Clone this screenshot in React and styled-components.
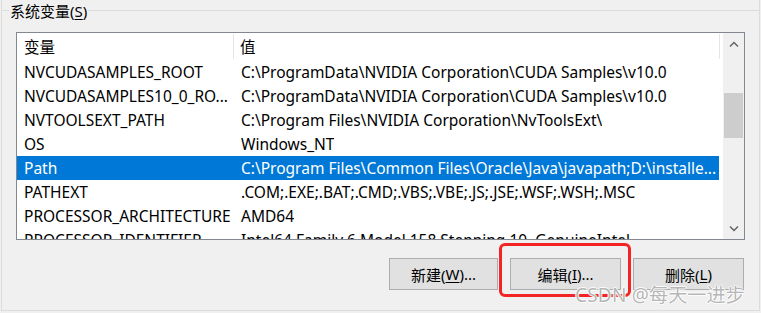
import React from "react";
import styled, { createGlobalStyle } from "styled-components";

const GlobalStyle = createGlobalStyle`
  html, body {
    margin: 0;
    padding: 0;
    background: #f0f0f0;
  }
  body {
    font-family: "Noto Sans", "Noto Sans CJK SC", sans-serif;
    font-size: 15px;
    color: #000;
  }
`;

const rows = [
  ["NVCUDASAMPLES_ROOT", "C:\\ProgramData\\NVIDIA Corporation\\CUDA Samples\\v10.0"],
  ["NVCUDASAMPLES10_0_RO...", "C:\\ProgramData\\NVIDIA Corporation\\CUDA Samples\\v10.0"],
  ["NVTOOLSEXT_PATH", "C:\\Program Files\\NVIDIA Corporation\\NvToolsExt\\"],
  ["OS", "Windows_NT"],
  ["Path", "C:\\Program Files\\Common Files\\Oracle\\Java\\javapath;D:\\installe...", true],
  ["PATHEXT", ".COM;.EXE;.BAT;.CMD;.VBS;.VBE;.JS;.JSE;.WSF;.WSH;.MSC"],
  ["PROCESSOR_ARCHITECTURE", "AMD64"],
  ["PROCESSOR_IDENTIFIER", "Intel64 Family 6 Model 158 Stepping 10, GenuineIntel"],
];

const Arrow = ({ up }) => (
  <svg width="10" height="6" viewBox="0 0 10 6">
    <path
      d={up ? "M1 5.5 L5 1.5 L9 5.5" : "M1 0.5 L5 4.5 L9 0.5"}
      fill="none"
      stroke="#606060"
      strokeWidth="1.4"
    />
  </svg>
);

const App = () => (
  <Page>
    <GlobalStyle />
    <GroupBox>
      <Legend>
        系统变量(<u>S</u>)
      </Legend>
      <ListBox>
        <ListContent>
          <HeaderRow>
            <HeaderCell $first>变量</HeaderCell>
            <HeaderCell>值</HeaderCell>
          </HeaderRow>
          {rows.map(([name, value, selected]) => (
            <Row key={name} $selected={selected}>
              <NameCell>{name}</NameCell>
              <ValueCell>{value}</ValueCell>
            </Row>
          ))}
        </ListContent>
        <ScrollBar>
          <ScrollButton>
            <Arrow up />
          </ScrollButton>
          <Track>
            <Thumb />
          </Track>
          <ScrollButton>
            <Arrow />
          </ScrollButton>
        </ScrollBar>
      </ListBox>
      <ButtonRow>
        <Button $w={109}>
          新建(<u>W</u>)...
        </Button>
        <Button $w={111}>
          编辑(<u>I</u>)...
        </Button>
        <Button $w={111}>
          删除(<u>L</u>)
        </Button>
      </ButtonRow>
    </GroupBox>
    <Highlight />
    <Watermark>CSDN @每天一进步</Watermark>
  </Page>
);

export default App;

const Page = styled.div`
  position: relative;
  width: 761px;
  height: 313px;
  overflow: hidden;
  padding: 0 1px;
  box-sizing: border-box;
`;

const GroupBox = styled.fieldset`
  margin: 0;
  padding: 0 14px 0 14px;
  width: 759px;
  height: 311px;
  box-sizing: border-box;
  border: 1px solid #dcdcdc;
  border-top: none;
  position: relative;
  display: flex;
  flex-direction: column;

  &::before {
    content: "";
    position: absolute;
    left: -1px;
    right: -1px;
    top: 10px;
    border-top: 1px solid #dcdcdc;
  }
`;

const Legend = styled.div`
  position: relative;
  z-index: 1;
  align-self: flex-start;
  margin-left: -7px;
  padding: 0 1px;
  height: 22px;
  line-height: 22px;
  background: #f0f0f0;
  white-space: nowrap;

  u {
    text-underline-offset: 2px;
  }
`;

const ListBox = styled.div`
  margin-top: 10px;
  width: 729px;
  height: 208px;
  box-sizing: border-box;
  border: 1px solid #828790;
  background: #fff;
  display: flex;
  overflow: hidden;
  font-size: 15.5px;
`;

const ListContent = styled.div`
  width: 705px;
  flex: none;
  overflow: hidden;
`;

const HeaderRow = styled.div`
  display: flex;
  height: 27px;
  width: 705px;
`;

const HeaderCell = styled.div`
  display: flex;
  align-items: center;
  padding-left: ${(p) => (p.$first ? "7px" : "6px")};
  width: ${(p) => (p.$first ? "217px" : "486px")};
  box-sizing: border-box;
  border-right: 1px solid #e5e5e5;
  margin: 1px 0 1px;
`;

const Row = styled.div`
  display: flex;
  height: 24px;
  width: 702px;
  align-items: center;
  white-space: nowrap;
  background: ${(p) => (p.$selected ? "#0078d7" : "transparent")};
  color: ${(p) => (p.$selected ? "#fff" : "#000")};
`;

const NameCell = styled.div`
  width: 218px;
  padding-left: 7px;
  box-sizing: border-box;
  overflow: hidden;
  flex: none;
`;

const ValueCell = styled.div`
  padding-left: 6px;
  overflow: hidden;
`;

const ScrollBar = styled.div`
  width: 21px;
  flex: none;
  margin-left: auto;
  background: #f0f0f0;
  display: flex;
  flex-direction: column;
`;

const ScrollButton = styled.div`
  height: 21px;
  display: flex;
  align-items: center;
  justify-content: center;
`;

const Track = styled.div`
  flex: 1;
  padding-top: 39px;
`;

const Thumb = styled.div`
  width: 19px;
  margin: 0 auto;
  height: 45px;
  background: #cdcdcd;
`;

const ButtonRow = styled.div`
  display: flex;
  justify-content: flex-end;
  gap: 12px;
  margin-top: 18px;
  width: 728px;
`;

const Button = styled.div`
  width: ${(p) => p.$w}px;
  height: 32px;
  box-sizing: border-box;
  border: 1px solid #adadad;
  background: #e1e1e1;
  display: flex;
  align-items: center;
  justify-content: center;
  white-space: nowrap;

  u {
    text-underline-offset: 2px;
  }
`;

const Highlight = styled.div`
  position: absolute;
  left: 499px;
  top: 243px;
  width: 132px;
  height: 54px;
  box-sizing: border-box;
  border: 3px solid #f22424;
  border-radius: 6px;
`;

const Watermark = styled.div`
  position: absolute;
  left: 575px;
  top: 282px;
  font-size: 19px;
  line-height: 26px;
  color: rgba(150, 150, 150, 0.7);
  text-shadow: -1px 0 0 rgba(255, 255, 255, 0.85), 1px 0 0 rgba(255, 255, 255, 0.85),
    0 -1px 0 rgba(255, 255, 255, 0.85), 0 1px 0 rgba(255, 255, 255, 0.85);
  white-space: nowrap;
  letter-spacing: 0.2px;
`;
